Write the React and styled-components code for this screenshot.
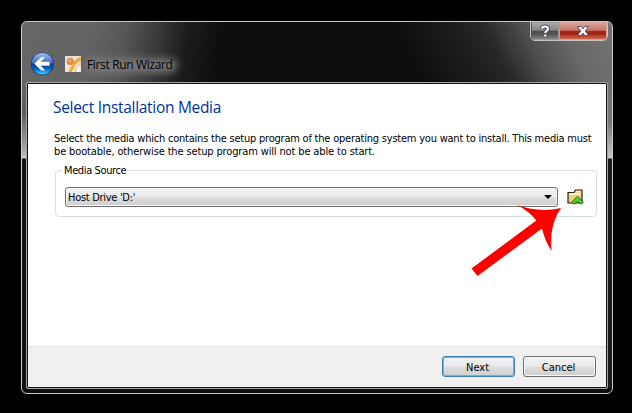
import React from 'react';
import styled, { createGlobalStyle, css } from 'styled-components';

const Global = createGlobalStyle`
  html, body { margin: 0; background: #000; }
  body { overflow: hidden; }
  * { box-sizing: border-box; }
`;

const uiFont = css`
  font-family: "DejaVu Sans Condensed", "DejaVu Sans", sans-serif;
  font-stretch: condensed;
  font-size: 11px;
  line-height: 13px;
  color: #000;
  white-space: nowrap;
`;

const Desktop = styled.div`
  width: 632px;
  height: 413px;
  padding: 21px 19px 19px 21px;
  background: #000;
`;

const Window = styled.div`
  position: relative;
  width: 592px;
  height: 373px;
  border: 1px solid #c9c9c9;
  border-radius: 6px;
  padding: 0 4px 4px;
  overflow: hidden;
  background:
    linear-gradient(100deg, #666 0, #646464 70px, #555 105px, #3a3a3a 135px, #1c1c1c 165px, rgba(13, 13, 13, 0) 200px) 0 0 / 250px 60px no-repeat,
    linear-gradient(62deg, rgba(13, 13, 13, 0) 60px, #1a1a1a 105px, #262626 140px, #505050 178px, #686868 210px, #757575 260px) 100% 0 / 260px 60px no-repeat,
    linear-gradient(#666 60px, #5c5c5c 90px, #aaa 130px, #ccc 136px, #111 137px) 0 0 / 5px 366px no-repeat,
    linear-gradient(#737373 60px, #777 100px, #bbb 130px, #ccc 136px, #1c1c1c 137px) 100% 0 / 5px 366px no-repeat,
    #0d0d0d;
`;

const TitleBar = styled.header`
  height: 60px;
  display: flex;
  align-items: flex-start;
`;

const BackIcon = styled.svg`
  width: 26px;
  height: 26px;
  margin: 29px 0 0 3px;
`;

const AppIcon = styled.svg`
  width: 16px;
  height: 16px;
  margin: 34px 0 0 10px;
`;

const Caption = styled.h1`
  position: relative;
  z-index: 0;
  margin: 35px 0 0 6px;
  font: 400 12px/16px "Open Sans", "Noto Sans", sans-serif;
  letter-spacing: -0.35px;
  color: #000;
  white-space: nowrap;

  &::before {
    content: '';
    position: absolute;
    z-index: -1;
    inset: 2px -4px 1px -2px;
    border-radius: 7px;
    background: #7c7c7c;
    filter: blur(4px);
  }
`;

const CaptionButtons = styled.div`
  display: flex;
  height: 20px;
  margin: -1px 0 0 auto;
  border: 1px solid #c4c4c4;
  border-radius: 0 0 5px 5px;
  overflow: hidden;
`;

const CaptionButton = styled.button`
  width: ${(p) => (p.$close ? 48 : 28)}px;
  height: 18px;
  padding: 0;
  border: 1px solid ${(p) => (p.$close ? '#d4a09a' : '#999')};
  border-left-color: ${(p) => (p.$close ? '#d88' : '#555')};
  background: ${(p) =>
    p.$close
      ? 'linear-gradient(#d9a29a, #c77267 46%, #ad2711 50%, #9e2411 65%, #cf6a50)'
      : 'linear-gradient(#a8a8a8, #858585 46%, #4b4b4b 50%, #555 70%, #828282)'};
  svg { display: block; margin: 0 auto; }
`;

const Client = styled.main`
  width: 582px;
  height: 307px;
  border: 1px solid #a2a2a2;
  border-radius: 2px;
  background: #fff;
  box-shadow: inset 0 0 0 1px #141414;
  padding: 1px;
  display: flex;
  flex-direction: column;
`;

const Body = styled.section`
  flex: 1;
  padding: 13px 9px 0 25px;
`;

const Heading = styled.h2`
  margin: 0 0 15px;
  font: 400 15.5px/20px "Open Sans", "Noto Sans", sans-serif;
  letter-spacing: -0.3px;
  color: #003399;
  white-space: nowrap;
`;

const Paragraph = styled.p`
  ${uiFont}
  margin: 0 0 0 1px;
  letter-spacing: ${(p) => p.$track}px;
`;

const Group = styled.fieldset`
  ${uiFont}
  display: flex;
  align-items: center;
  width: 542px;
  height: 54px;
  margin: 5px 0 0 2px;
  padding: 2px 9px 0;
  border: 1px solid #d5dfe5;
  border-radius: 4px;
  letter-spacing: -0.3px;
`;

const Legend = styled.legend`
  padding: 1px 2px 0;
  margin-left: -3px;
  margin-bottom: -1px;
  letter-spacing: -0.38px;
`;

const Combo = styled.div`
  display: flex;
  align-items: center;
  justify-content: space-between;
  width: 493px;
  height: 20px;
  padding: 0 5px 0 2px;
  border: 1px solid #707070;
  border-radius: 3px;
  background: linear-gradient(#f2f2f2, #ebebeb 48%, #dddddd 52%, #cfcfcf);
  box-shadow: inset 0 0 0 1px #f6f6f6;
`;

const FolderIcon = styled.svg`
  width: 17px;
  height: 16px;
  margin-left: 9px;
`;

const Footer = styled.footer`
  height: 41px;
  display: flex;
  gap: 8px;
  justify-content: flex-end;
  padding: 9px 10px 0 0;
  border-top: 1px solid #dfdfdf;
  background: #f0f0f0;
`;

const PushButton = styled.button`
  ${uiFont}
  width: 73px;
  height: 21px;
  padding: 1px 2px 0 0;
  border: 1px solid ${(p) => (p.$primary ? '#3c7fb1' : '#707070')};
  border-radius: 3px;
  background: linear-gradient(#f2f2f2, #ebebeb 48%, #dddddd 52%, #cfcfcf);
  box-shadow: inset 0 0 0 1px ${(p) => (p.$primary ? '#3cc8f0' : '#fafafa')};
`;

const Pointer = styled.svg`
  position: absolute;
  left: 444px;
  top: 178px;
  width: 100px;
  height: 80px;
`;

export default function App() {
  return (
    <Desktop>
      <Global />
      <Window>
        <TitleBar>
          <BackIcon viewBox="0 0 26 26">
            <defs>
              <linearGradient id="orb" x1="0" y1="0" x2="0" y2="1">
                <stop offset="0" stopColor="#a9bce5" />
                <stop offset=".45" stopColor="#3f70c4" />
                <stop offset=".52" stopColor="#063a96" />
                <stop offset=".75" stopColor="#086bc5" />
                <stop offset="1" stopColor="#48e4ff" />
              </linearGradient>
            </defs>
            <circle cx="13.4" cy="13" r="12.2" fill="#444" stroke="#777" strokeWidth=".8" />
            <circle cx="13.4" cy="12.7" r="11.3" fill="url(#orb)" stroke="#17397e" strokeWidth=".8" />
            <path d="M5.5 12.7 12.3 6.3h3.4l-4.3 4.7h9v3.5h-9l4.3 4.7h-3.4z" fill="#fff" stroke="#dce8fa" strokeWidth=".5" strokeLinejoin="round" />
          </BackIcon>
          <AppIcon viewBox="0 0 16 16">
            <path d="M0 0h16v16H0z" fill="#e7e1d8" />
            <path d="M10 16c0-5 1-7 6-8v8z" fill="#f8f6f2" />
            <path d="M8 8c1 3-1 5-3.5 8M8.5 8C11 7 12 3 16 2.8" fill="none" stroke="#f5a623" strokeWidth="3" />
            <path d="M8 8.3C5 10 2 9 0 12" fill="none" stroke="#fff6df" strokeWidth="1" />
            <path d="M10.5 16c0-4.5 2-6.8 5.5-7.5" fill="none" stroke="#efb347" strokeWidth="1" />
            <circle cx="5.3" cy="5.5" r="3.2" fill="#ef8c3c" stroke="#d97625" strokeWidth=".7" />
            <circle cx="4.8" cy="4.8" r="1.3" fill="#f9b47a" />
          </AppIcon>
          <Caption>First Run Wizard</Caption>
          <CaptionButtons>
            <CaptionButton aria-label="Help">
              <svg width="12" height="14" viewBox="0 0 12 14">
                <path d="M3 4.4C3 2 9 1.8 9 4.8 9 6.7 6.3 6.6 6.3 9M6.3 10.5v2" fill="none" stroke="#4a4d5c" strokeWidth="4" />
                <path d="M3 4.4C3 2 9 1.8 9 4.8 9 6.7 6.3 6.6 6.3 9M6.3 10.5v2" fill="none" stroke="#fff" strokeWidth="2.1" />
              </svg>
            </CaptionButton>
            <CaptionButton $close aria-label="Close">
              <svg width="14" height="14" viewBox="0 0 14 14">
                <path d="M1.5 2.5h3.7L7 4.8l1.8-2.3h3.7L9.2 7l3.3 4.5H8.8L7 9.2l-1.8 2.3H1.5L4.8 7z" fill="#fff" stroke="#555a70" strokeWidth="1" />
              </svg>
            </CaptionButton>
          </CaptionButtons>
        </TitleBar>
        <Client>
          <Body>
            <Heading>Select Installation Media</Heading>
            <Paragraph $track={-0.22}>
              Select the media which contains the setup program of the operating system you want to install. This media must
            </Paragraph>
            <Paragraph $track={-0.14}>be bootable, otherwise the setup program will not be able to start.</Paragraph>
            <Group>
              <Legend>Media Source</Legend>
              <Combo>
                <span>Host Drive 'D:'</span>
                <svg width="8" height="4" viewBox="0 0 8 4">
                  <path d="M0 0h8L4 4z" />
                </svg>
              </Combo>
              <FolderIcon viewBox="0 0 17 16">
                <path d="M1 3.5h6L8.5 1H15v13H1z" fill="#f2d08a" stroke="#24200f" strokeWidth="1.2" strokeLinejoin="round" />
                <path d="M2 5h12" stroke="#fff5cc" strokeWidth="1.5" />
                <path d="M9 2.5h5" stroke="#fff2bd" />
                <path d="M4.6 13.2l5.9-6 5.9 6-2 1.8-3.9-2.2L6.6 15z" fill="#4bd02c" stroke="#205e15" strokeWidth=".9" />
              </FolderIcon>
            </Group>
          </Body>
          <Footer>
            <PushButton $primary>Next</PushButton>
            <PushButton>Cancel</PushButton>
          </Footer>
        </Client>
        <Pointer viewBox="466 200 100 80">
          <path d="M471.5 268.5 536.3 220.5Q529 211 517 205Q540 213 561 208Q549 225 551.5 251Q545 241 542 228.5L477.5 276z" fill="#f00" />
        </Pointer>
      </Window>
    </Desktop>
  );
}
